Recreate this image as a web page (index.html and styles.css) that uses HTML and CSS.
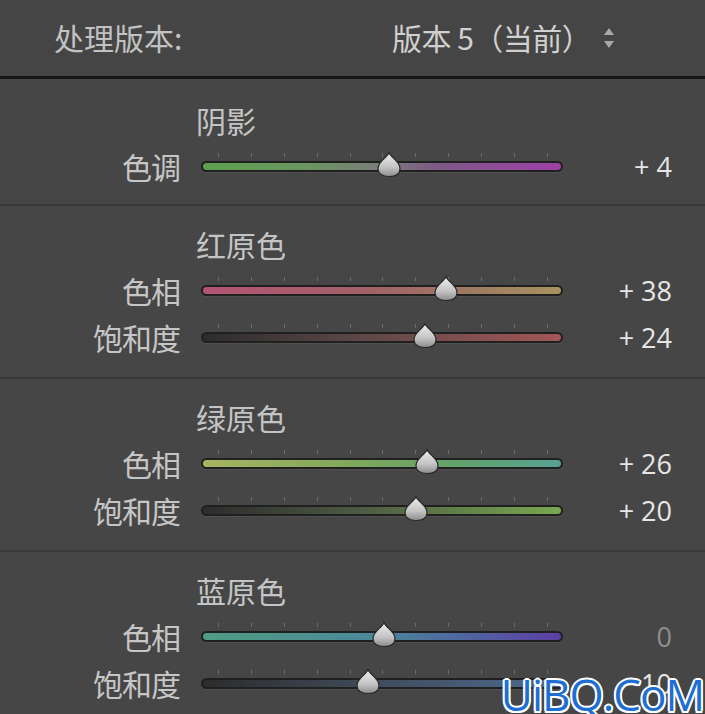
FILE: index.html
```html
<!DOCTYPE html>
<html lang="zh">
<head>
<meta charset="utf-8">
<link rel="stylesheet" href="styles.css">
</head>
<body>
<div class="panel">
  <div class="header">
    <div class="hdr-label">处理版本:</div>
    <div class="hdr-value">版本 5（当前）<svg class="updown" width="12" height="22" viewBox="0 0 12 22"><path d="M6 1 L11 8 H1 Z" fill="#a8a8a8"/><path d="M6 21 L11 14 H1 Z" fill="#a8a8a8"/></svg></div>
  </div>

  <div class="section first">
    <div class="sec-title">阴影</div>
    <div class="row">
      <div class="label">色调</div>
      <div class="track-wrap">
        <div class="ticks"><i></i><i></i><i></i><i></i><i></i><i></i><i></i><i></i><i></i><i></i><i></i></div>
        <div class="track tone"></div>
        <svg class="thumb" style="left:51.9%" width="26" height="27" viewBox="0 0 26 26"><use href="#thumb"/></svg>
      </div>
      <div class="value">+ 4</div>
    </div>
  </div>

  <div class="section">
    <div class="sec-title">红原色</div>
    <div class="row">
      <div class="label">色相</div>
      <div class="track-wrap">
        <div class="ticks"><i></i><i></i><i></i><i></i><i></i><i></i><i></i><i></i><i></i><i></i><i></i></div>
        <div class="track red-hue"></div>
        <svg class="thumb" style="left:67.7%" width="26" height="27" viewBox="0 0 26 26"><use href="#thumb"/></svg>
      </div>
      <div class="value">+ 38</div>
    </div>
    <div class="row">
      <div class="label">饱和度</div>
      <div class="track-wrap">
        <div class="ticks"><i></i><i></i><i></i><i></i><i></i><i></i><i></i><i></i><i></i><i></i><i></i></div>
        <div class="track red-sat"></div>
        <svg class="thumb" style="left:61.9%" width="26" height="27" viewBox="0 0 26 26"><use href="#thumb"/></svg>
      </div>
      <div class="value">+ 24</div>
    </div>
  </div>

  <div class="section">
    <div class="sec-title">绿原色</div>
    <div class="row">
      <div class="label">色相</div>
      <div class="track-wrap">
        <div class="ticks"><i></i><i></i><i></i><i></i><i></i><i></i><i></i><i></i><i></i><i></i><i></i></div>
        <div class="track green-hue"></div>
        <svg class="thumb" style="left:62.4%" width="26" height="27" viewBox="0 0 26 26"><use href="#thumb"/></svg>
      </div>
      <div class="value">+ 26</div>
    </div>
    <div class="row">
      <div class="label">饱和度</div>
      <div class="track-wrap">
        <div class="ticks"><i></i><i></i><i></i><i></i><i></i><i></i><i></i><i></i><i></i><i></i><i></i></div>
        <div class="track green-sat"></div>
        <svg class="thumb" style="left:59.4%" width="26" height="27" viewBox="0 0 26 26"><use href="#thumb"/></svg>
      </div>
      <div class="value">+ 20</div>
    </div>
  </div>

  <div class="section last">
    <div class="sec-title">蓝原色</div>
    <div class="row">
      <div class="label">色相</div>
      <div class="track-wrap">
        <div class="ticks"><i></i><i></i><i></i><i></i><i></i><i></i><i></i><i></i><i></i><i></i><i></i></div>
        <div class="track blue-hue"></div>
        <svg class="thumb" style="left:50.6%" width="26" height="27" viewBox="0 0 26 26"><use href="#thumb"/></svg>
      </div>
      <div class="value zero">0</div>
    </div>
    <div class="row">
      <div class="label">饱和度</div>
      <div class="track-wrap">
        <div class="ticks"><i></i><i></i><i></i><i></i><i></i><i></i><i></i><i></i><i></i><i></i><i></i></div>
        <div class="track blue-sat"></div>
        <svg class="thumb" style="left:46.1%" width="26" height="27" viewBox="0 0 26 26"><use href="#thumb"/></svg>
      </div>
      <div class="value">− 10</div>
    </div>
  </div>

  <div class="watermark">UiBQ.CoM</div>
</div>

<svg width="0" height="0" class="defs">
  <defs>
    <linearGradient id="tg" x1="0" y1="0" x2="0" y2="1">
      <stop offset="0" stop-color="#f0f0f0"/>
      <stop offset="0.6" stop-color="#c4c4c4"/>
      <stop offset="1" stop-color="#8c8c8c"/>
    </linearGradient>
    <symbol id="thumb" viewBox="0 0 26 26">
      <path d="M13 1 C14.5 6 24 9.5 24 17 C24 22.5 19.5 25 13 25 C6.5 25 2 22.5 2 17 C2 9.5 11.5 6 13 1 Z" fill="url(#tg)" stroke="#2a2a2a" stroke-width="1.2"/>
    </symbol>
  </defs>
</svg>
</body>
</html>
```

FILE: styles.css
```css
* { box-sizing: border-box; }
html, body {
  margin: 0;
  padding: 0;
  background: #464646;
}
body {
  width: 705px;
  height: 714px;
  overflow: hidden;
  font-family: "Noto Sans CJK SC", "Noto Sans", sans-serif;
  color: #c9c9c9;
}
.panel {
  position: relative;
  width: 705px;
  height: 714px;
}
.header {
  height: 79px;
  display: flex;
  align-items: center;
  padding-bottom: 2px;
  border-bottom: 3px solid #161616;
  background: #454545;
}
.hdr-label {
  width: 392px;
  padding-left: 54px;
  font-size: 30px;
  line-height: 38px;
  color: #c2c2c2;
}
.hdr-value {
  display: flex;
  align-items: center;
  font-size: 30px;
  line-height: 38px;
  color: #d0d0d0;
  letter-spacing: -0.5px;
}
.updown {
  margin-left: 12px;
  margin-top: 2px;
}
.section {
  padding: 15px 0 16px;
  border-bottom: 2px solid #393939;
}
.section.first {
  padding-top: 18px;
  padding-bottom: 14px;
}
.section.last {
  border-bottom: none;
}
.sec-title {
  height: 46px;
  line-height: 46px;
  padding-left: 196px;
  font-size: 30px;
  color: #c4c4c4;
}
.row {
  height: 47px;
  display: flex;
  align-items: center;
}
.label {
  width: 180px;
  text-align: right;
  font-size: 30px;
  line-height: 47px;
  color: #c6c6c6;
  letter-spacing: -1px;
}
.track-wrap {
  position: relative;
  width: 362px;
  height: 47px;
  margin-left: 21px;
}
.ticks {
  position: absolute;
  left: 17px;
  right: 15px;
  top: 10px;
  height: 4px;
  display: flex;
  justify-content: space-between;
}
.ticks i {
  display: block;
  width: 1px;
  height: 4px;
  background: #6c6c6c;
}
.track {
  position: absolute;
  left: 0;
  right: 0;
  top: 18px;
  height: 11px;
  border-radius: 6px;
  border: 2px solid #202020;
  box-shadow: 0 1px 0 rgba(255,255,255,0.06);
}
.tone { background: linear-gradient(to right, #5ea04f, #6a9560 30%, #7b7b7b 50%, #7e5a86 65%, #9d40a8); }
.red-hue { background: linear-gradient(to right, #b25473, #a26068 45%, #9d7b62 75%, #a8925f); }
.red-sat { background: linear-gradient(to right, #2c2c2c, #5e4848 45%, #a35656); }
.green-hue { background: linear-gradient(to right, #a6b462, #82a85c 40%, #62a26a 70%, #57a293); }
.green-sat { background: linear-gradient(to right, #2c2c2c, #4e5c44 45%, #78a850); }
.blue-hue { background: linear-gradient(to right, #4f9c82, #4b8a98 45%, #4f6aa0 70%, #5c3ea4); }
.blue-sat { background: linear-gradient(to right, #2c2c2c, #3f4a58 45%, #4d6b92); }
.thumb {
  position: absolute;
  top: 8px;
  transform: translateX(-50%);
}
.value {
  width: 109px;
  text-align: right;
  font-family: "Open Sans", "Noto Sans", sans-serif;
  font-size: 27px;
  line-height: 47px;
  color: #e6e6e6;
}
.value.zero {
  color: #8e8e8e;
}
.defs {
  position: absolute;
  width: 0;
  height: 0;
}
.watermark {
  position: absolute;
  right: 1px;
  bottom: -10px;
  font-family: "Open Sans", "Noto Sans", sans-serif;
  font-size: 44px;
  font-weight: 400;
  letter-spacing: -1px;
  color: #1d6fd3;
  text-shadow: -2px 0 #fff, 2px 0 #fff, 0 -2px #fff, 0 2px #fff, -1.5px -1.5px #fff, 1.5px 1.5px #fff, -1.5px 1.5px #fff, 1.5px -1.5px #fff;
}
```
